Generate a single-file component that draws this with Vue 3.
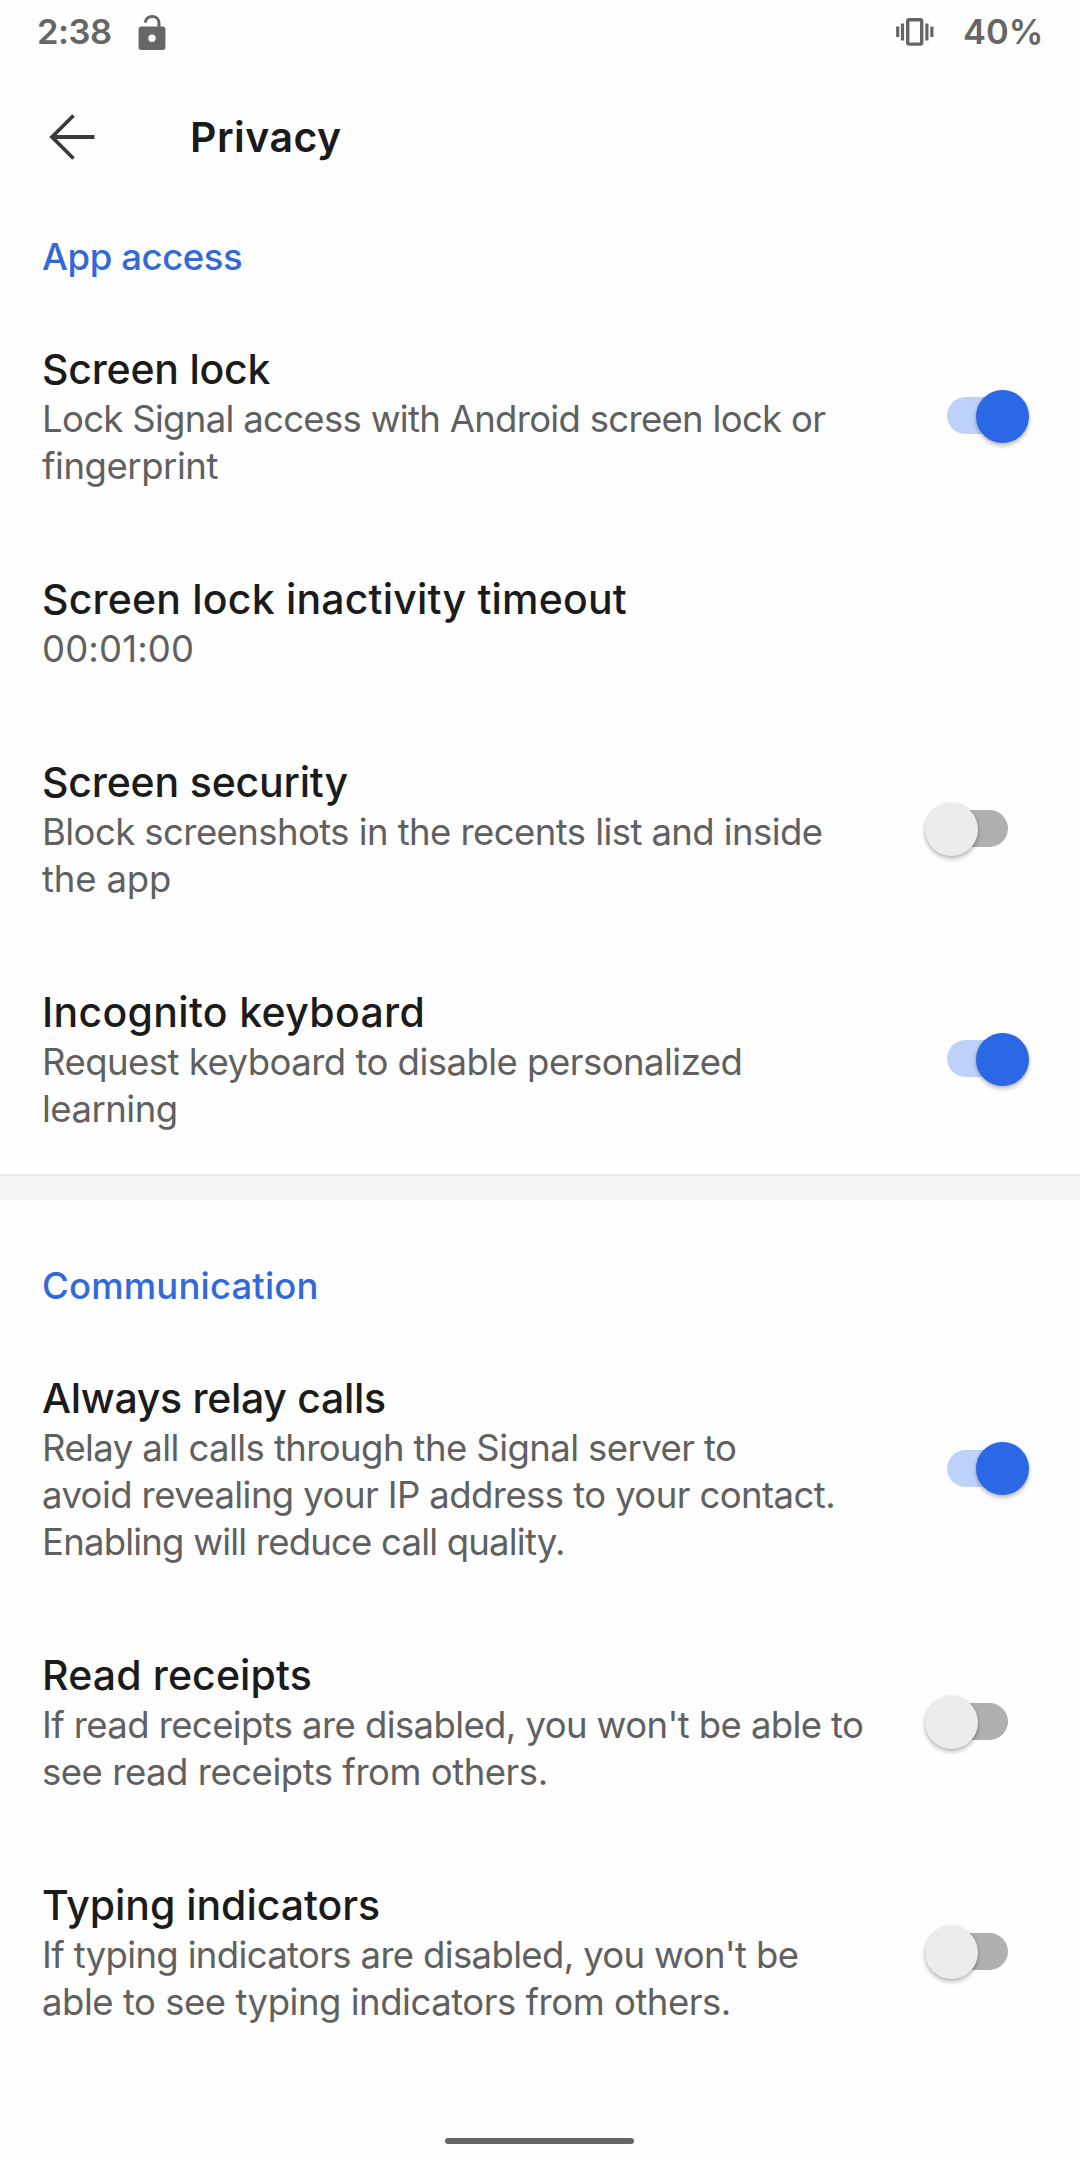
<script setup>
import { reactive } from 'vue'

// Each line is [text, letter-spacing in px]
const sections = reactive([
  {
    title: ['App access', -0.4],
    items: [
      {
        title: ['Screen lock', -0.22],
        lines: [['Lock Signal access with Android screen lock or', -0.69], ['fingerprint', -0.45]],
        on: true,
      },
      {
        title: ['Screen lock inactivity timeout', 0.19],
        lines: [['00:01:00', 0.15]],
      },
      {
        title: ['Screen security', -0.18],
        lines: [['Block screenshots in the recents list and inside', -0.57], ['the app', -0.15]],
        on: false,
      },
      {
        title: ['Incognito keyboard', 0.33],
        lines: [['Request keyboard to disable personalized', -0.52], ['learning', -0.5]],
        on: true,
      },
    ],
  },
  {
    title: ['Communication', 0.16],
    items: [
      {
        title: ['Always relay calls', -0.31],
        lines: [
          ['Relay all calls through the Signal server to', -0.58],
          ['avoid revealing your IP address to your contact.', -0.58],
          ['Enabling will reduce call quality.', -0.79],
        ],
        on: true,
      },
      {
        title: ['Read receipts', 0.13],
        lines: [["If read receipts are disabled, you won't be able to", -0.6], ['see read receipts from others.', -0.47]],
        on: false,
      },
      {
        title: ['Typing indicators', -0.04],
        lines: [["If typing indicators are disabled, you won't be", -0.65], ['able to see typing indicators from others.', -0.47]],
        on: false,
      },
    ],
  },
])

const track = (line) => ({ letterSpacing: line[1] + 'px' })
const toggle = (item) => {
  if (item.on !== undefined) item.on = !item.on
}
</script>

<template>
  <div class="screen">
    <div class="status">
      <span class="clock">2:38</span>
      <svg class="lock" width="28" height="38" viewBox="0 0 28 38">
        <path d="M7 9.600C8 5.600 10.700 3.400 14.200 3.400c4 0 6.800 2.800 6.800 6.800v5" fill="none" stroke="#666" stroke-width="3" />
        <path fill="#666" fill-rule="evenodd" d="M3.200 13.500h21.600a2.600 2.600 0 0 1 2.600 2.600v18.200a2.600 2.600 0 0 1-2.600 2.600H3.200a2.600 2.600 0 0 1-2.600-2.600V16.100A2.600 2.600 0 0 1 3.200 13.500zM14 21.500a3.700 3.700 0 1 0 0 7.400 3.700 3.700 0 0 0 0-7.400z" />
      </svg>
      <svg class="vibrate" width="38" height="28" viewBox="0 0 38 28">
        <rect x="11.700" y="1.700" width="14" height="24.400" rx="1.500" fill="none" stroke="#666" stroke-width="3.400" />
        <path d="M1.700 8.500v10.600M6.500 5.500v17M30.900 5.500v17M35.900 8.500v10.600" stroke="#666" stroke-width="3.200" />
      </svg>
      <span class="battery">40%</span>
    </div>

    <header class="toolbar">
      <svg class="back" width="48" height="48" viewBox="0 0 48 48" fill="none" stroke="#3b3b3b" stroke-width="3.800">
        <path d="M26.500 2.500 5 24l21.500 21.500M4.500 24H47.500" />
      </svg>
      <h1>Privacy</h1>
    </header>

    <section v-for="section in sections" :key="section.title[0]" class="section">
      <h2 :style="track(section.title)">{{ section.title[0] }}</h2>
      <div v-for="item in section.items" :key="item.title[0]" class="item" @click="toggle(item)">
        <div class="text">
          <div class="title" :style="track(item.title)">{{ item.title[0] }}</div>
          <div v-for="line in item.lines" :key="line[0]" class="line" :style="track(line)">{{ line[0] }}</div>
        </div>
        <div v-if="item.on !== undefined" class="switch" :class="{ on: item.on }">
          <span class="thumb"></span>
        </div>
      </div>
    </section>

    <div class="nav"><span></span></div>
  </div>
</template>

<style>
body {
  margin: 0;
  background: #fefefe;
}
</style>

<style scoped>
.screen {
  width: 1080px;
  height: 2160px;
  display: flex;
  flex-direction: column;
  overflow: hidden;
  background: #fefefe;
  font-family: Inter, Roboto, sans-serif;
  color: #1b1b1b;
}
.status {
  display: flex;
  align-items: center;
  height: 63px;
  padding: 0 37px;
  box-sizing: border-box;
  color: #666;
  font-size: 34.5px;
  font-weight: 600;
  line-height: 63px;
}
.clock {
  width: 101px;
  letter-spacing: -0.5px;
}
.vibrate {
  margin-left: auto;
  margin-right: 29px;
}
.battery {
  width: 80px;
  white-space: nowrap;
}
.toolbar {
  display: flex;
  align-items: center;
  height: 147px;
  padding-left: 47px;
  margin-bottom: 3px;
}
h1 {
  margin: 0 0 0 95px;
  font-size: 41px;
  font-weight: 600;
  line-height: 50px;
  letter-spacing: 0.46px;
}
.section + .section {
  border-top: 2px solid #e8e8e8;
  padding-top: 66px;
  box-shadow: inset 0 24px #f4f4f4;
}
h2 {
  margin: 0;
  padding-left: 42px;
  font-size: 36.5px;
  font-weight: 500;
  line-height: 88px;
  color: #3269d9;
}
.item {
  display: flex;
  align-items: center;
  justify-content: space-between;
  padding: 43px 52px 41px 42px;
}
.title {
  margin-bottom: 2px;
  font-size: 41px;
  font-weight: 500;
  line-height: 50px;
  white-space: nowrap;
}
.line {
  font-size: 36.5px;
  line-height: 47px;
  color: #606060;
  white-space: nowrap;
}
.switch {
  position: relative;
  display: flex;
  align-items: center;
  width: 102px;
  height: 52px;
  margin-bottom: 3px;
}
.switch::before {
  content: '';
  width: 61px;
  height: 37px;
  margin-left: 21px;
  border-radius: 19px;
  background: #b0b0b0;
}
.thumb {
  position: absolute;
  left: -1px;
  top: 0;
  width: 53px;
  height: 53px;
  border-radius: 50%;
  background: #ececec;
  box-shadow: 0 3px 4px rgba(0, 0, 0, 0.24), 0 0 3px rgba(0, 0, 0, 0.12);
}
.switch.on::before {
  background: #bed2f9;
}
.switch.on .thumb {
  left: auto;
  right: -1px;
  background: #2a68e6;
}
.nav {
  display: flex;
  justify-content: center;
  margin-top: auto;
  padding: 0 1px 16px 0;
}
.nav span {
  width: 189px;
  height: 6px;
  border-radius: 3px;
  background: #666;
}
</style>
